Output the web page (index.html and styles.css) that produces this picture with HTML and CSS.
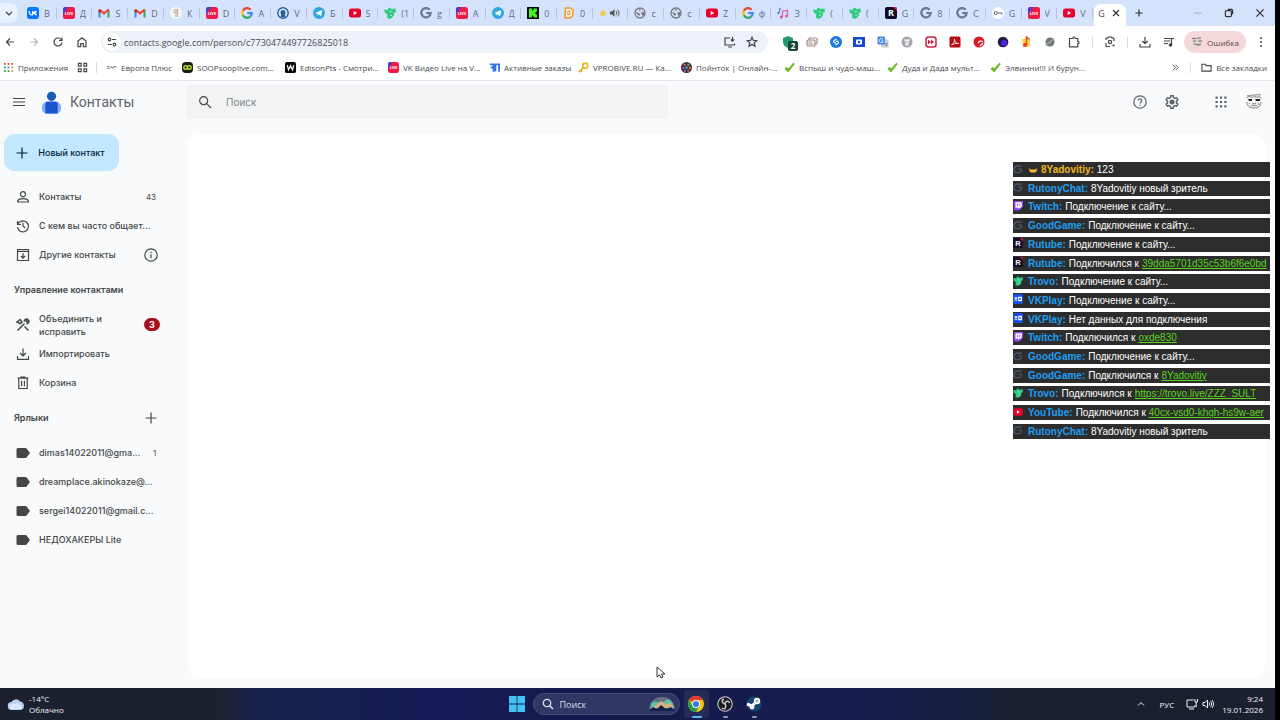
FILE: index.html
```html
<!DOCTYPE html>
<html lang="ru">
<head>
<meta charset="utf-8">
<title>Контакты</title>
<link rel="stylesheet" href="styles.css">
</head>
<body>
<svg class="defs" aria-hidden="true">
  <symbol id="vk" viewBox="0 0 12 12"><rect width="12" height="12" rx="3" fill="#0077ff"/><path d="M2 4c.3 2.500 1.500 4 3.600 4V4M5.600 6C7 6 7.800 5 8.200 4M5.600 6C7.300 6 8.300 7 8.700 8M9.500 4 7.500 6l2.200 2" fill="none" stroke="#fff" stroke-width="1.200"/></symbol>
  <symbol id="live" viewBox="0 0 12 12"><rect width="12" height="12" rx="2.500" fill="#ef1b47"/><path d="M0 8V2.500A2.500 2.500 0 0 1 2.500 0H5Z" fill="#4b3bd0"/><text x="6" y="7.600" font-size="4" font-weight="700" text-anchor="middle" fill="#fff">LIVE</text></symbol>
  <symbol id="gmail" viewBox="0 0 12 12"><path d="M1.500 10.500V2.800" stroke="#4285f4" stroke-width="2"/><path d="M10.500 10.500V2.800" stroke="#34a853" stroke-width="2"/><path d="M1.200 2.500 6 6.400l4.800-3.900" fill="none" stroke="#ea4335" stroke-width="2.200"/><path d="M.5 2.500v2.300l2 1.400V3.500z" fill="#b32a22"/></symbol>
  <symbol id="para" viewBox="0 0 12 12"><circle cx="6" cy="6" r="6" fill="#f7f7f5"/><path d="M8.500 2.800H5.200a1.500 1.500 0 0 0 0 3H6M6 2.800V10M7.600 2.800V10" fill="none" stroke="#b9a79b"/></symbol>
  <symbol id="google" viewBox="0 0 12 12"><g fill="none" stroke-width="2.200"><path d="M9.600 2.700A4.700 4.700 0 0 0 1.900 3.800" stroke="#ea4335"/><path d="M1.900 3.800a4.700 4.700 0 0 0 0 4.400" stroke="#fbbc05"/><path d="M1.900 8.200a4.700 4.700 0 0 0 7.300 1.400" stroke="#34a853"/><path d="M9.200 9.600A4.700 4.700 0 0 0 10.700 6H6.200" stroke="#4285f4"/></g></symbol>
  <symbol id="ggrey" viewBox="0 0 12 12"><path d="M9.600 2.700A4.700 4.700 0 1 0 10.700 6H6.200" fill="none" stroke="#697891" stroke-width="2.200"/></symbol>
  <symbol id="gg" viewBox="0 0 12 12"><path d="M10.500 2.500H4L1.500 5v3.500L3.500 10.500H8l2-2V6H5.500" fill="none" stroke="#4d6078" stroke-width="1.300"/></symbol>
  <symbol id="shield" viewBox="0 0 12 12"><circle cx="6" cy="6" r="5.200" fill="#dfeaf7" stroke="#285f9d" stroke-width="1.400"/><circle cx="6" cy="5.500" r="2.500" fill="#285f9d"/><path d="M4.500 7h3l1 3h-5z" fill="#285f9d"/></symbol>
  <symbol id="tg" viewBox="0 0 12 12"><circle cx="6" cy="6" r="6" fill="#32a7dc"/><path d="m2.300 6 7-3-1.200 6.200-2.300-1.600-1.200 1V7z" fill="#fff"/></symbol>
  <symbol id="yt" viewBox="0 0 12 12"><rect y="1.500" width="12" height="9" rx="2.500" fill="#e6002d"/><path d="m4.700 4 3.500 2-3.500 2z" fill="#fff"/></symbol>
  <symbol id="trovo" viewBox="0 0 12 12"><path d="M0 2.500 3.500 3 5 .5l3 1.500 3.500-.5.500 3.500-2.500 1 .8 2-2 2.500-2.800 1.500-2.500-1.500L3.300 7 1 6z" fill="#2ecb7e"/><path d="m5.500 4.500 3 .5M6 8l2 .5" stroke="#9eeac3"/></symbol>
  <symbol id="kick" viewBox="0 0 12 12"><rect width="12" height="12" fill="#051006"/><path d="M2 1.500h3v2h1v-1h1v-1h3v3H9v1H8v1h1v1h1v3H7v-1H6v-1H5v2H2z" fill="#43f51d"/></symbol>
  <symbol id="donate" viewBox="0 0 12 12"><path d="M2.500 1h5l2.800 2.500L9.500 9 7 11H2z" fill="#fff0d8" stroke="#ee9238" stroke-width="1.500"/><path d="M5 4h2v3.500H4.600z" fill="none" stroke="#ee9238"/></symbol>
  <symbol id="star" viewBox="0 0 12 12"><path d="m6 .5 1.600 3.600 4 .4-3 2.700.9 4L6 9.200l-3.500 2 .9-4-3-2.700 4-.4z" fill="#f4c83d"/></symbol>
  <symbol id="globe" viewBox="0 0 12 12"><circle cx="6" cy="6" r="5" fill="none" stroke="#73777d" stroke-width="1.300"/><path d="M1.500 5 5 6l1 1.500L5 9zM5 1.500 7 3 5.500 4.500zM7 5.500l3.500-.5L10 8 8.500 9z" fill="#73777d"/></symbol>
  <symbol id="music" viewBox="0 0 12 12"><path d="M5.500 10V4.300l5-1V9" fill="none" stroke="#da5fc2" stroke-width="1.300"/><circle cx="4.300" cy="10" r="1.500" fill="#e85591"/><circle cx="9.500" cy="9" r="1.500" fill="#ec5a77"/><path d="M2.500 6V1l2 1.500" stroke="#6b84df" fill="none"/><circle cx="1.500" cy="6" r="1.200" fill="#6b84df"/></symbol>
  <symbol id="rutube" viewBox="0 0 12 12"><rect width="12" height="12" rx="2" fill="#120b29"/><path d="M8 0h2a2 2 0 0 1 2 2v2z" fill="#ed1951"/><text x="6" y="9.200" text-anchor="middle" font-size="9" font-weight="700" fill="#fff">R</text></symbol>
  <symbol id="key" viewBox="0 0 12 12"><circle cx="6" cy="6" r="6" fill="#fff"/><circle cx="3.700" cy="6" r="1.500" fill="none" stroke="#526471"/><path d="M5.500 6H10v1.500" fill="none" stroke="#526471"/></symbol>
  <symbol id="twitch" viewBox="0 0 12 12"><path d="M1 0h11v7L8 11H6l-2 1v-1H1z" fill="#9146ff"/><path d="M3 1.500h7.500v5L9 8H7.500L6 9.500V8H3z" fill="#fff"/><path d="M5.500 3v3M8.200 3v3" stroke="#9146ff"/></symbol>
  <symbol id="vkplay" viewBox="0 0 12 12"><rect width="12" height="12" rx="2" fill="#164fe8"/><path d="m2 4 3 4M5 4 2 8M7 4h3v4H7z" stroke="#fff" fill="none" stroke-width="1.400"/></symbol>
  <symbol id="check" viewBox="0 0 12 12"><path d="m.5 7.500 2.200-2.200 2 1.700L10.200.8l1.600 1.300L4.500 11.500z" fill="#6cb82f"/></symbol>
  <symbol id="tag" viewBox="0 0 14 12"><path d="M2 1h7.500c.6 0 1 .3 1.300.7L14 6l-3.200 4.300c-.3.400-.7.700-1.300.7H2A1.500 1.500 0 0 1 .5 9.500v-7A1.500 1.500 0 0 1 2 1z" fill="#444746"/></symbol>
</svg>

<div class="window">
  <header class="browser">
    <div class="tabstrip">
      <button class="tab-list" aria-label="Поиск вкладок"><svg viewBox="0 0 10 10"><path d="m2.500 4 2.500 2.500L7.500 4"/></svg></button>
      <nav class="tabs" aria-label="Вкладки">
        <button class="tab"><svg><use href="#vk"/></svg><span>В</span></button>
        <button class="tab"><svg><use href="#live"/></svg><span>Д</span></button>
        <button class="tab"><svg><use href="#gmail"/></svg><span>S</span></button>
        <button class="tab"><svg><use href="#gmail"/></svg><span>D</span></button>
        <button class="tab"><svg><use href="#para"/></svg><span>К</span></button>
        <button class="tab"><svg><use href="#live"/></svg><span>D</span></button>
        <button class="tab"><svg><use href="#google"/></svg><span>A</span></button>
        <button class="tab"><svg><use href="#shield"/></svg><span>V</span></button>
        <button class="tab"><svg><use href="#tg"/></svg><span>Б</span></button>
        <button class="tab"><svg><use href="#yt"/></svg><span>S</span></button>
        <button class="tab"><svg><use href="#trovo"/></svg><span>(1</span></button>
        <button class="tab"><svg><use href="#ggrey"/></svg><span>g</span></button>
        <button class="tab"><svg><use href="#live"/></svg><span>A</span></button>
        <button class="tab"><svg><use href="#tg"/></svg><span>Д</span></button>
        <button class="tab"><svg><use href="#kick"/></svg><span>0</span></button>
        <button class="tab"><svg><use href="#donate"/></svg><span>0</span></button>
        <button class="tab sound"><svg class="mini"><use href="#star"/></svg><svg viewBox="0 0 12 12"><path d="M2 4.500h2L6.500 2v8L4 7.500H2z" fill="#555"/><path d="M8 4c1 1 1 3 0 4M9.500 2.500c2 2 2 5 0 7" fill="none" stroke="#555"/></svg></button>
        <button class="tab"><svg><use href="#globe"/></svg><span>c</span></button>
        <button class="tab"><svg><use href="#globe"/></svg><span>c</span></button>
        <button class="tab"><svg><use href="#yt"/></svg><span>Z</span></button>
        <button class="tab"><svg><use href="#google"/></svg><span>ф</span></button>
        <button class="tab"><svg><use href="#music"/></svg><span>З</span></button>
        <button class="tab"><svg><use href="#trovo"/></svg><span>(</span></button>
        <button class="tab"><svg><use href="#trovo"/></svg><span>(</span></button>
        <button class="tab"><svg><use href="#rutube"/></svg><span>G</span></button>
        <button class="tab"><svg><use href="#ggrey"/></svg><span>8</span></button>
        <button class="tab"><svg><use href="#ggrey"/></svg><span>C</span></button>
        <button class="tab"><svg><use href="#key"/></svg><span>G</span></button>
        <button class="tab"><svg><use href="#live"/></svg><span>V</span></button>
        <button class="tab"><svg><use href="#yt"/></svg><span>V</span></button>
      </nav>
      <div class="tab-active"><span>G</span><button aria-label="Закрыть вкладку"><svg viewBox="0 0 10 10"><path d="m2.500 2.500 5 5m0-5-5 5"/></svg></button></div>
      <button class="new-tab" aria-label="Новая вкладка"><svg viewBox="0 0 10 10"><path d="M5 2v6M2 5h6"/></svg></button>
      <div class="win-controls">
        <button aria-label="Свернуть"><svg viewBox="0 0 10 10"><path d="M2 5h6" stroke="#a9b4c8"/></svg></button>
        <button aria-label="Развернуть"><svg viewBox="0 0 10 10"><rect x="2" y="3" width="5" height="5" rx="1"/><path d="M4 2h3a1 1 0 0 1 1 1v3"/></svg></button>
        <button aria-label="Закрыть"><svg viewBox="0 0 10 10"><path d="m2 2 6 6m0-6-6 6"/></svg></button>
      </div>
    </div>

    <div class="toolbar">
      <div class="nav">
        <button aria-label="Назад"><svg viewBox="0 0 12 12"><path d="M10 6H2.500M6 2.500 2.500 6 6 9.500"/></svg></button>
        <button class="dim" aria-label="Вперёд"><svg viewBox="0 0 12 12"><path d="M2 6h7.500M6 2.500 9.500 6 6 9.500"/></svg></button>
        <button aria-label="Обновить"><svg viewBox="0 0 12 12"><path d="M9.500 4A4 4 0 1 0 10 6.500M10 1.500v3H7"/></svg></button>
        <button aria-label="Домой"><svg viewBox="0 0 12 12"><path d="M2 5 6 1.800 10 5v5.700H7.300V7.500H4.700v3.200H2z"/></svg></button>
      </div>
      <form class="omnibox">
        <button type="button" class="site" aria-label="Сведения о сайте"><svg viewBox="0 0 12 12"><circle cx="3.500" cy="3.500" r="1.300"/><path d="M6 3.500h4M2 8.500h4"/><circle cx="8.500" cy="8.500" r="1.300"/></svg></button>
        <input type="text" aria-label="Адрес" value="contacts.google.com/person/c7730474497726825018">
        <button type="button" aria-label="Установить"><svg viewBox="0 0 12 12"><path d="M6 2H1v7h9.500V7.500M4 11h4M8.500 1v4M6.800 3.500l1.700 1.700 1.700-1.700"/></svg></button>
        <button type="button" aria-label="В закладки"><svg viewBox="0 0 12 12"><path d="m6 1.200 1.400 3.200 3.400.3-2.600 2.200.8 3.400L6 8.500l-3 1.800.8-3.400L1.200 4.700l3.400-.3z"/></svg></button>
      </form>
      <div class="extensions">
        <button class="ext-counter" aria-label="Защита"><svg viewBox="0 0 12 12"><path d="m6 0 5 2v4c0 3-2 5-5 6-3-1-5-3-5-6V2z" fill="#279a70" stroke="none"/></svg><b>2</b></button>
        <button aria-label="Карточки"><svg viewBox="0 0 12 12"><g stroke="#a58c85"><rect x="3" y="2" width="8" height="6" rx="1"/><rect x="1" y="4" width="8" height="6" rx="1" fill="#f4ece8"/><path d="M2.500 6h3M2.500 8H7"/></g></svg></button>
        <button aria-label="Shazam"><svg viewBox="0 0 12 12"><circle cx="6" cy="6" r="6" fill="#1978e5" stroke="none"/><path d="M6.500 3 4 4.700c-1.200 1 0 2.300 1 2.300l1-.5M5.500 9 8 7.300c1.200-1 0-2.300-1-2.300l-1 .5" stroke="#fff"/></svg></button>
        <button aria-label="Снимок"><svg viewBox="0 0 12 12"><rect y="1" width="12" height="10" fill="#1748c6" stroke="none"/><rect x="3" y="3.500" width="6" height="5" rx="1" fill="#fff" stroke="none"/><circle cx="6" cy="6" r="1.200" fill="#1748c6" stroke="none"/></svg></button>
        <button aria-label="Переводчик"><svg viewBox="0 0 12 12"><rect x="4" y="3.500" width="7.500" height="8" rx="1" fill="#c8cdd4" stroke="none"/><rect x=".5" y=".5" width="7.500" height="8" rx="1" fill="#4c86ea" stroke="none"/><path d="M6 3.500A2 2 0 1 0 6.300 5H4.500" stroke="#fff" stroke-width=".8"/><path d="m8.500 7 2 3m0-3-2 3" stroke="#68727c" stroke-width=".8"/></svg></button>
        <button aria-label="T"><svg viewBox="0 0 12 12"><circle cx="6" cy="6" r="5.500" fill="#a3a5aa" stroke="none"/><path d="M3 4h6M5 4v5h2V4" stroke="#fff"/></svg></button>
        <button aria-label="Ускорение видео"><svg viewBox="0 0 12 12"><rect x="1" y="1" width="10" height="10" rx="2.500" stroke="#c92140" stroke-width="1.500"/><path d="m3 3.500 3 2.500-3 2.500zM6 3.500 9 6 6 8.500z" fill="#c92140" stroke="none"/></svg></button>
        <button aria-label="PDF"><svg viewBox="0 0 12 12"><rect x=".5" y=".5" width="11" height="11" rx="1.500" fill="#b30b0f" stroke="none"/><path d="M2.500 9c2-1 3.500-4 3-6 0 3 2 4.500 4 4.500-2-.5-5 .3-7 1.500z" stroke="#fff" stroke-width=".8"/></svg></button>
        <button aria-label="Блокировка"><svg viewBox="0 0 12 12"><circle cx="6" cy="6" r="5.500" fill="#db1921" stroke="none"/><path d="m5 7 2-2 3 .5M7 10l3-3" stroke="#fff"/></svg></button>
        <button aria-label="Шар"><svg viewBox="0 0 12 12"><circle cx="6" cy="6" r="5.300" fill="#251b45" stroke="none"/><circle cx="7" cy="7" r="3" fill="#5121e7" stroke="none"/></svg></button>
        <button aria-label="Музыка"><svg viewBox="0 0 12 12"><path d="M2 3h8v6l-2 2H3z" fill="#ffd642" stroke="none"/><path d="M6.500 9V1l3 2.500" stroke="#ee3f24" stroke-width="1.500"/><circle cx="5" cy="9" r="2" fill="#ee3f24" stroke="none"/></svg></button>
        <button aria-label="Планета"><svg viewBox="0 0 12 12"><circle cx="6" cy="6" r="4.500" fill="#72777b" stroke="none"/><path d="m1.500 9.500 9-7" stroke="#a8acae"/></svg></button>
        <button aria-label="Расширения"><svg viewBox="0 0 12 12"><path d="M1.500 2.500h3.300c0-2 2.400-2 2.400 0h2.600v2.800c1.700 0 1.700 2.400 0 2.400v3.100H1.500z"/></svg></button>
      </div>
      <i class="sep"></i>
      <button class="tool" aria-label="Объектив"><svg viewBox="0 0 12 12"><path d="M2 4V2.800c0-.6.400-1 1-1h1L4.500 1h3l.5.800h1c.6 0 1 .4 1 1V5M2 7v2.500c0 .6.400 1 1 1h3"/><circle cx="6" cy="6" r="1.600"/><circle cx="9.500" cy="9.500" r=".5"/></svg></button>
      <i class="sep"></i>
      <button class="tool" aria-label="Загрузки"><svg viewBox="0 0 12 12"><path d="M6 1v6.500M3.300 5 6 7.700 8.700 5M1 8v3h10V8"/></svg></button>
      <button class="tool" aria-label="Медиа"><svg viewBox="0 0 12 12"><path d="M1 2.500h7M1 5h6M1 7.500h4M8.500 9V2.500H11"/><circle cx="7.500" cy="9" r="1.200" fill="#444"/></svg></button>
      <button class="error"><svg viewBox="0 0 12 12"><rect x="1" y="1" width="10" height="10" rx="3" fill="#ddd5d2" stroke="none"/><path d="M1 2.500h4M6 2h4M2 5h3M7 5h4M3 8h2l2 1 3-1" stroke="#786f6e"/></svg>Ошибка</button>
      <button class="menu" aria-label="Меню"><svg viewBox="0 0 12 12"><g fill="#444" stroke="none"><circle cx="6" cy="2" r="1"/><circle cx="6" cy="6" r="1"/><circle cx="6" cy="10" r="1"/></g></svg></button>
    </div>

    <nav class="bookmarks" aria-label="Закладки">
      <a href="#" class="bm apps"><svg viewBox="0 0 12 12"><path d="M1 1h2v2H1zM5 1h2v2H5zM9 1h2v2H9z" fill="#e7473c"/><path d="M1 5h2v2H1z" fill="#3f9b56"/><path d="M5 5h2v2H5z" fill="#4285f4"/><path d="M9 5h2v2H9zM9 9h2v2H9z" fill="#dca134"/><path d="M1 9h2v2H1zM5 9h2v2H5z" fill="#38934e"/></svg>Приложения</a>
      <a href="#" class="bm groups" aria-label="Группы"><svg viewBox="0 0 12 12"><path d="M1.500 1.500h3v3h-3zM7.500 1.500h3v3h-3zM1.500 7.500h3v3h-3zM7.500 7.500h3v3h-3z" fill="none" stroke="#444" stroke-width="1.200"/></svg></a>
      <i class="sep"></i>
      <a href="#" class="bm europa"><svg viewBox="0 0 12 12"><path d="M1 5h3M1 7h3M5 7l1-2 1 2M8 7V5h3v1" fill="none" stroke="#777"/></svg>Европа Плюс</a>
      <a href="#" class="bm"><svg viewBox="0 0 12 12"><rect width="12" height="12" rx="4" fill="#17200c"/><rect x="2" y="4" width="4" height="4" rx="2" fill="none" stroke="#c1e82b" stroke-width="1.500"/><rect x="6" y="4" width="4" height="4" rx="2" fill="none" stroke="#c1e82b" stroke-width="1.500"/></svg>SOOPsooplive.com...</a>
      <a href="#" class="bm"><svg viewBox="0 0 12 12"><rect width="12" height="12" rx="2" fill="#080808"/><path d="m2.500 3.500 1.300 5L6 4l2.200 4.500 1.300-5" fill="none" stroke="#fff" stroke-width="1.300"/></svg>EdisonPts - Смотри...</a>
      <a href="#" class="bm vkv"><svg><use href="#live"/></svg>VK Видео Live на V...</a>
      <a href="#" class="bm orders"><svg viewBox="0 0 12 12"><path d="M1 2.500h4v8M5 6H2M7 10V2.500h4v8M7 3v3" fill="none" stroke="#3675db" stroke-width="2"/></svg>Активные заказы</a>
      <a href="#" class="bm"><svg viewBox="0 0 12 12"><circle cx="8" cy="4" r="2.700" fill="none" stroke="#efbc2e" stroke-width="2"/><path d="M6 6 1 11m2-2 1.500 1.500" stroke="#e5a51f" stroke-width="1.800"/></svg>VPROBIVE.RU — Ка...</a>
      <a href="#" class="bm"><svg viewBox="0 0 12 12"><circle cx="6" cy="6" r="6" fill="#342d35"/><g><circle cx="4" cy="3" r="1.300" fill="#d45b6a"/><circle cx="8" cy="3" r="1.300" fill="#60a853"/><circle cx="2.500" cy="6.500" r="1.300" fill="#b64cad"/><circle cx="6" cy="6" r="1.300" fill="#55bdc2"/><circle cx="9.700" cy="6.500" r="1.300" fill="#d77c3f"/><circle cx="4.300" cy="9.500" r="1.300" fill="#5b74cf"/><circle cx="8" cy="9.500" r="1.300" fill="#d8476b"/></g></svg>Пойнток | Онлайн-...</a>
      <a href="#" class="bm"><svg><use href="#check"/></svg>Вспыш и чудо-маш...</a>
      <a href="#" class="bm"><svg><use href="#check"/></svg>Дуда и Дада мульт...</a>
      <a href="#" class="bm"><svg><use href="#check"/></svg>Элвинни!!! И бурун...</a>
      <button class="more" aria-label="Ещё закладки"><svg viewBox="0 0 12 12"><path d="m3 3 3 3-3 3m3-6 3 3-3 3"/></svg></button>
      <i class="sep"></i>
      <a href="#" class="bm all"><svg viewBox="0 0 12 12"><path d="M1 2.500h3.500L5.700 4H11v6H1z" fill="none" stroke="#444" stroke-width="1.200"/></svg>Все закладки</a>
    </nav>
  </header>

  <div class="app">
    <header class="app-head">
      <div class="brand">
        <button class="burger" aria-label="Главное меню"><svg viewBox="0 0 14 14"><path d="M1 3.500h12M1 7h12M1 10.500h12"/></svg></button>
        <svg class="logo" viewBox="0 0 20 24"><circle cx="10" cy="5.500" r="4.800" fill="#185abc"/><rect y="11.500" width="20" height="12" rx="5" fill="#82aaff"/><path d="M3.500 13.500a2.500 2.500 0 0 1 2.500-2.500h8a2.500 2.500 0 0 1 2.500 2.500v10h-13z" fill="#1a56cf"/></svg>
        <span>Контакты</span>
      </div>
      <label class="search"><svg viewBox="0 0 14 14"><circle cx="5.700" cy="5.700" r="4"/><path d="m8.700 8.700 4.300 4.300"/></svg><input type="search" placeholder="Поиск" aria-label="Поиск"></label>
      <div class="account">
        <button aria-label="Справка"><svg viewBox="0 0 14 14"><circle cx="7" cy="7" r="6.200"/><path d="M5.200 5.600c0-2.300 3.600-2.300 3.600 0C8.800 7 7 7 7 8.500M7 9.700V11"/></svg></button>
        <button aria-label="Настройки"><svg viewBox="0 0 14 14"><path d="m5.800.8h2.400l.4 1.800 1.300.8 1.700-.6 1.300 2.100L11.500 6.200v1.600l1.400 1.300-1.300 2.100-1.700-.6-1.300.8-.4 1.800H5.800l-.4-1.800-1.300-.8-1.700.6-1.300-2.100 1.400-1.300V6.200L1.100 4.900l1.300-2.100 1.700.6 1.300-.8z" stroke-width="1.500"/><circle cx="7" cy="7" r="2" fill="#5f6368"/></svg></button>
        <button class="grid-btn" aria-label="Приложения Google"><svg viewBox="0 0 14 14"><path d="M1.500 1.500h2.200v2.200H1.500zM5.900 1.500h2.200v2.200H5.900zM10.300 1.500h2.200v2.200h-2.200zM1.500 5.900h2.200v2.200H1.500zM5.900 5.900h2.200v2.200H5.900zM10.300 5.900h2.200v2.200h-2.200zM1.500 10.300h2.200v2.200H1.500zM5.900 10.300h2.200v2.200H5.900zM10.300 10.300h2.200v2.200h-2.200z" fill="#5f6368" stroke="none"/></svg></button>
        <button class="avatar" aria-label="Аккаунт"><svg viewBox="0 0 18 18"><circle cx="9" cy="9" r="8.500" fill="#f3f3f3" stroke="none"/><path d="M2 3c2-1 3 0 5-1 2 1 4-1 6 0l3-.5M2 5c1-2 3-2 5-.5 2-1 4-1 5 0 2-1.500 4-1 4 1M2 9c0 4 3 6 7 6s6-1 7-6M7 10l2 1 2-1M6 13l2-1 1 1 2-1 1 1M4 10l1 1M13 10l1 2" stroke="#666" stroke-width=".8"/><path d="M3 6h4v2H4zM10 6h5v2h-4z" fill="#222" stroke="none"/></svg></button>
      </div>
    </header>

    <div class="content">
      <aside class="sidebar">
        <button class="create"><svg viewBox="0 0 14 14"><path d="M7 1.500v11M1.500 7h11"/></svg>Новый контакт</button>
        <nav>
          <a href="#" class="row"><svg viewBox="0 0 14 14"><circle cx="7" cy="4.200" r="2.500"/><path d="M1.700 12v-1.500C3.500 8 10.500 8 12.300 10.500V12z"/></svg><span>Контакты</span><small>43</small></a>
          <a href="#" class="row"><svg viewBox="0 0 14 14"><path d="M1.500 2v3.500H5M1.800 5.500A5.500 5.500 0 1 1 1.500 8M7 3.800V7l2.300 2"/></svg><span>С кем вы часто общает...</span></a>
          <a href="#" class="row"><svg viewBox="0 0 14 14"><path d="M1.500 1.500h11v11h-11zM1.500 3.300h11M7 5v5M4.800 8 7 10.200 9.200 8"/></svg><span>Другие контакты</span><svg class="info" viewBox="0 0 14 14"><circle cx="7" cy="7" r="6.200"/><path d="M7 6.200v4M7 3.700v1.300"/></svg></a>
          <h2>Управление контактами</h2>
          <a href="#" class="row two"><svg viewBox="0 0 14 14"><path d="m1.500 12.500 7-7M8 3.500C8.500 1.500 10 .8 11.500 1.200L10 3l1 1 1.800-1.500c.4 1.500-.3 3-2.300 3.500M1 4l3-2.500L6 4 4.500 5.500zM8.500 8.500l4 4" stroke-width="1.500"/></svg><span>Объединить и<br>исправить</span><b class="badge">3</b></a>
          <a href="#" class="row"><svg viewBox="0 0 14 14"><path d="M7 1.500v7M4 6l3 3 3-3M1.500 9v3.300h11V9"/></svg><span>Импортировать</span></a>
          <a href="#" class="row"><svg viewBox="0 0 14 14"><path d="M1.500 2.200h11M5 2V1.200h4V2M2.800 2.500v10h8.400v-10M5.600 4.800v5.500M8.400 4.800v5.500"/></svg><span>Корзина</span></a>
          <h2>Ярлыки<button class="add" aria-label="Создать ярлык"><svg viewBox="0 0 14 14"><path d="M7 1.500v11M1.500 7h11"/></svg></button></h2>
          <a href="#" class="row"><svg class="tag"><use href="#tag"/></svg><span>dimas14022011@gma...</span><small>1</small></a>
          <a href="#" class="row"><svg class="tag"><use href="#tag"/></svg><span>dreamplace.akinokaze@...</span></a>
          <a href="#" class="row"><svg class="tag"><use href="#tag"/></svg><span>sergei14022011@gmail.c...</span></a>
          <a href="#" class="row"><svg class="tag"><use href="#tag"/></svg><span>НЕДОХАКЕРЫ Lite</span></a>
        </nav>
      </aside>
      <main></main>
    </div>
  </div>

  <footer class="taskbar">
    <button class="weather"><svg viewBox="0 0 18 14"><path d="M5 13a4 4 0 0 1-.5-8A5 5 0 0 1 13 4.500 4.300 4.300 0 0 1 13.500 13z" fill="#bcd0f5"/><path d="M3 12a4 4 0 0 1 5-5 5 5 0 0 1 7 5z" fill="#dde7fb"/></svg><span>-14°C<br>Облачно</span></button>
    <div class="dock">
      <button class="start" aria-label="Пуск"><svg viewBox="0 0 16 16"><path d="M0 0h7.600v7.600H0zM8.400 0H16v7.600H8.400zM0 8.400h7.600V16H0zM8.400 8.400H16V16H8.400z" fill="#42c5f5"/></svg></button>
      <label class="task-search"><svg viewBox="0 0 12 12"><circle cx="5" cy="5" r="3.700" fill="none" stroke="#e5e8f2" stroke-width="1.300"/><path d="m7.700 7.700 3.300 3.300" stroke="#e5e8f2" stroke-width="1.400"/></svg><input type="search" placeholder="Поиск" aria-label="Поиск в Windows"><svg class="aurora" viewBox="0 0 28 16"><path d="M1 13C2 5 7 1 14 1s12 4 13 12z" fill="#657386"/><path d="M3 8c5-6 9 3 13-2s7-2 9 2l1 4H3z" fill="#5cc6a2"/><path d="m7 10 6-5 5 3 4-1 4 5H5z" fill="#d5b27e"/><path d="m1 15 4-4 4 2 4-4 5 4 5-2 4 4z" fill="#16234f"/></svg></label>
      <button class="task active" aria-label="Chrome"><svg viewBox="0 0 16 16"><circle cx="8" cy="8" r="8" fill="#fbc116"/><path d="M8 8 1.100 4A8 8 0 0 1 14.900 4H8z" fill="#e33b2e"/><path d="M1.100 4A8 8 0 0 0 8 16l3.400-6L8 8 4.600 10z" fill="#279b4b"/><circle cx="8" cy="8" r="4" fill="#fff"/><circle cx="8" cy="8" r="3.100" fill="#337ee9"/></svg></button>
      <button class="task" aria-label="OBS"><svg viewBox="0 0 16 16"><circle cx="8" cy="8" r="7.200" fill="#1c1c20" stroke="#c8c8cc" stroke-width="1.100"/><path d="M7 3c-3 1-2 4 1 5M12.500 7c-1-3-4-2-4.500 1M5 12c3 2 5-1 3-4" fill="none" stroke="#c8c8cc" stroke-width="1.500"/></svg></button>
      <button class="task" aria-label="Steam"><svg viewBox="0 0 16 16"><circle cx="8" cy="8" r="7.500" fill="#17466f"/><path d="m1 8 5 2 5-5" fill="none" stroke="#fff" stroke-width="3"/><circle cx="11" cy="5" r="3.200" fill="#fff"/><circle cx="11" cy="5" r="1.500" fill="#9bb9ce"/><circle cx="6" cy="11" r="2.400" fill="#fff"/></svg></button>
    </div>
    <div class="tray">
      <button aria-label="Скрытые значки"><svg viewBox="0 0 12 12"><path d="m3 7.500 3-3 3 3"/></svg></button>
      <button class="lang">РУС</button>
      <button class="net" aria-label="Сеть и звук"><svg viewBox="0 0 12 12"><path d="M7.500 2H1v7h8V7M3 11h5M9 1v3h2.500V1M10.200 4v5"/></svg><svg viewBox="0 0 12 12"><path d="M1 4.500h2L5.500 2v8L3 7.500H1zM7 4.300c.8 1 .8 2.400 0 3.400M8.500 3c1.500 1.800 1.500 4.200 0 6M10 2c2 2.500 2 5.500 0 8"/></svg></button>
      <time>9:24<br>19.01.2026</time>
    </div>
  </footer>

  <section class="chat" aria-label="Чат">
    <p><svg><use href="#gg"/></svg><svg class="crown" viewBox="0 0 12 12"><path d="M1 4l2.500 1.500h5L11 4l-1 4-2 1H4L2 8z" fill="#f1bd2c"/></svg><b class="gold">8Yadovitiy:</b> 123</p>
    <p><svg><use href="#gg"/></svg><b>RutonyChat:</b> 8Yadovitiy новый зритель</p>
    <p><svg><use href="#twitch"/></svg><b>Twitch:</b> Подключение к сайту...</p>
    <p><svg><use href="#gg"/></svg><b>GoodGame:</b> Подключение к сайту...</p>
    <p><svg><use href="#rutube"/></svg><b>Rutube:</b> Подключение к сайту...</p>
    <p><svg><use href="#rutube"/></svg><b>Rutube:</b> Подключился к <a href="#">39dda5701d35c53b6f6e0bd</a></p>
    <p><svg><use href="#trovo"/></svg><b>Trovo:</b> Подключение к сайту...</p>
    <p><svg><use href="#vkplay"/></svg><b>VKPlay:</b> Подключение к сайту...</p>
    <p><svg><use href="#vkplay"/></svg><b>VKPlay:</b> Нет данных для подключения</p>
    <p><svg><use href="#twitch"/></svg><b>Twitch:</b> Подключился к <a href="#">oxde830</a></p>
    <p><svg><use href="#gg"/></svg><b>GoodGame:</b> Подключение к сайту...</p>
    <p><svg><use href="#gg"/></svg><b>GoodGame:</b> Подключился к <a href="#">8Yadovitiy</a></p>
    <p><svg><use href="#trovo"/></svg><b>Trovo:</b> Подключился к <a href="#">https://trovo.live/ZZZ_SULT</a></p>
    <p><svg><use href="#yt"/></svg><b>YouTube:</b> Подключился к <a href="#">40cx-vsd0-khqh-hs9w-aer</a></p>
    <p><svg><use href="#gg"/></svg><b>RutonyChat:</b> 8Yadovitiy новый зритель</p>
  </section>
  <svg class="cursor" viewBox="0 0 10 14"><path d="M1 1v10l2.500-2.200L5 12l2-1-1.500-3H9z" fill="#fff" stroke="#333"/></svg>
</div>
</body>
</html>
```
FILE: styles.css
```css
* { box-sizing: border-box; }
body { margin: 0; background: #000; font-family: "Open Sans", "Noto Sans", sans-serif; font-size: 9px; color: #474a4f; }
button { border: 0; padding: 0; margin: 0; background: none; font: inherit; color: inherit; display: flex; align-items: center; justify-content: center; }
input { border: 0; padding: 0; background: none; font: inherit; color: inherit; min-width: 0; outline: 0; }
a { color: inherit; text-decoration: none; }
svg { width: 12px; height: 12px; flex: none; display: block; }
.defs { display: none; }
.window { position: relative; display: flex; flex-direction: column; min-height: 100vh; margin-right: 5px; overflow: hidden; background: #f8fafc; }
.sep { width: 1px; height: 11px; background: #d3dcec; flex: none; }

/* Tab strip */
.browser { background: #fff; border-bottom: 1px solid #e3e5e8; }
.tabstrip { display: flex; height: 26px; background: #d5e2fc; }
.tab-list { width: 18px; height: 20px; margin: 3px 4px 0 0; background: #eaf1fe; border-radius: 0 8px 8px 0; }
.tab-list svg, .tab-active svg, .new-tab svg, .win-controls svg { width: 12px; height: 12px; fill: none; stroke: #333; stroke-width: 1; }
.tabs { display: flex; flex: 1; min-width: 0; }
.tab { position: relative; flex: 1 1 0; min-width: 0; justify-content: flex-start; gap: 5px; padding-left: 5px; overflow: hidden; color: #5f6d86; }
.tab::after { content: ""; position: absolute; right: 1px; top: 8px; width: 1px; height: 11px; background: #b4c3e0; }
.tab span { width: 9px; overflow: hidden; white-space: nowrap; text-align: left; }
.sound { gap: 1px; }
.sound .mini { width: 8px; height: 8px; }
.tab-active { display: flex; align-items: center; justify-content: center; gap: 5px; width: 32px; height: 22px; margin-top: 4px; padding-bottom: 4px; background: #fff; border-radius: 7px 7px 0 0; }
.new-tab { width: 26px; }
.win-controls { display: flex; margin-left: 30px; }
.win-controls button { width: 31px; }

/* Toolbar */
.toolbar { display: flex; align-items: center; height: 32px; }
.toolbar svg { fill: none; stroke: #444; stroke-width: 1.2; }
.nav { display: flex; margin-left: -2px; }
.nav button, .tool { width: 24px; height: 24px; }
.nav .dim svg { stroke: #b7b9bd; }
.omnibox { display: flex; align-items: center; flex: 1; min-width: 0; height: 22px; margin: 0 8px 0 7px; padding: 0 5px 0 2px; border-radius: 11px; background: #edf1fa; }
.omnibox button { width: 22px; height: 18px; }
.omnibox .site { width: 18px; border-radius: 9px; background: #fff; margin-right: 3px; }
.omnibox input { flex: 1; }
.extensions { display: flex; flex: 0 0 310px; margin-right: 6px; }
.extensions button { flex: 1; position: relative; height: 24px; }
.extensions b { position: absolute; left: 12px; top: 11px; width: 10px; height: 10px; border-radius: 2px; background: #174434; color: #fff; font-size: 8px; line-height: 10px; }
.toolbar .sep + .tool { margin-left: 5px; }
.toolbar .tool + .sep { margin-left: 5px; }
.error { gap: 4px; height: 22px; width: 62px; margin-left: 3px; border-radius: 11px; background: #f5d8da; color: #5f4245; font-size: 8px; }
.menu { width: 22px; height: 24px; margin: 0 3px 0 4px; }

/* Bookmarks */
.bookmarks { display: flex; align-items: center; height: 22px; padding: 0 8px 4px 3px; white-space: nowrap; font-size: 8px; }
.bookmarks svg { width: 11px; height: 11px; }
.bm { display: flex; align-items: center; gap: 4px; flex: 0 0 103px; min-width: 0; }
.bm.apps { flex-basis: 74px; }
.bm.groups { flex-basis: 19px; }
.bm.europa { flex-basis: 76px; margin-left: 9px; }
.bm.vkv { flex-basis: 101px; }
.bm.orders { flex-basis: 89px; }
.bm.all { flex-basis: auto; margin-left: 10px; }
.more { margin: 0 9px 0 auto; }
.more svg { fill: none; stroke: #444; }

/* Contacts */
.app { display: flex; flex-direction: column; flex: 1; font-family: Inter, Roboto, sans-serif; color: #444746; }
.app svg { width: 14px; height: 14px; fill: none; stroke: #444746; stroke-width: 1.2; }
.app-head { display: flex; align-items: center; height: 42px; }
.brand { display: flex; align-items: center; width: 186px; padding-left: 12px; font-family: Roboto, sans-serif; font-size: 14px; color: #5f6368; }
.app .logo { width: 19px; height: 23px; margin: 0 9px 0 16px; stroke: none; }
.search { display: flex; align-items: center; flex: 0 1 482px; height: 34px; padding-left: 12px; gap: 14px; border-radius: 4px; background: #f1f3f4; }
.search input { flex: 1; font-size: 10px; }
.search input::placeholder { color: #80868b; opacity: 1; }
.account { display: flex; align-items: center; margin-left: auto; padding-right: 12px; }
.account button { width: 32px; height: 32px; }
.account svg { stroke: #5f6368; }
.account .grid-btn { margin-left: 17px; }
.account .avatar { width: 18px; margin-left: 8px; }
.account .avatar svg { width: 18px; height: 18px; }
.content { display: flex; flex: 1; padding: 11px 10px 10px 0; }
.sidebar { width: 188px; flex: none; }
.create { width: 115px; height: 37px; gap: 9px; margin: 0 0 11px 4px; padding-right: 3px; border-radius: 11px; background: #c2e7ff; color: #001d35; font-weight: 500; }
.create svg { stroke: #001d35; }
.row { display: flex; align-items: center; height: 29px; padding: 0 28px 0 16px; gap: 9px; white-space: nowrap; font-weight: 500; }
.row span { flex: 1; }
.row small { width: 18px; text-align: center; font-size: 8px; font-weight: 400; }
.row .info { margin-right: 2px; }
.row.two { line-height: 13px; }
.app .tag { stroke: none; height: 12px; }
.badge { width: 16px; height: 13px; border-radius: 7px; background: #a50e1c; color: #fff; line-height: 13px; text-align: center; }
.sidebar h2 { display: flex; align-items: center; justify-content: space-between; height: 41px; margin: 0; padding: 0 30px 0 14px; font-size: 9px; font-weight: 600; }
main { flex: 1; background: #fff; border-radius: 12px; }

/* Taskbar */
.taskbar { display: flex; align-items: center; justify-content: space-between; height: 32px; background: linear-gradient(90deg, #1c222d 0 17%, #17214a 20%, #161b58 34%, #151b4c 50%, #161b52 66%, #17203f 75%, #1a202e 80%); color: #f2f4f8; font-size: 8px; }
.weather { gap: 4px; margin-left: 7px; text-align: left; line-height: 11px; }
.weather svg { width: 18px; height: 14px; }
.dock { position: absolute; left: 50%; transform: translateX(-50%); display: flex; align-items: center; padding-right: 8px; }
.start { width: 32px; height: 32px; }
.start svg, .task svg { width: 16px; height: 16px; }
.task-search { display: flex; align-items: center; width: 147px; height: 22px; padding: 0 3px 0 8px; gap: 6px; border: 1px solid #454b79; border-radius: 11px; background: #303765; font-size: 9px; }
.task-search input { flex: 1; }
.task-search input::placeholder { color: #dcdfec; opacity: 1; }
.task-search .aurora { width: 28px; height: 16px; }
.task { position: relative; width: 25px; height: 28px; margin-left: 4px; border-radius: 4px; }
.task::after { content: ""; position: absolute; bottom: 0; left: 10px; width: 5px; height: 2px; border-radius: 1px; background: #9599a9; }
.task.active { background: #242b55; }
.task.active::after { left: 8px; width: 10px; background: #52bdf0; }
.tray { display: flex; align-items: center; padding-right: 12px; }
.tray svg { fill: none; stroke: #eef0f5; }
.lang { margin: 0 12px; }
.net { gap: 4px; }
.tray time { margin-left: 8px; text-align: right; line-height: 11px; }

/* Stream chat overlay */
.chat { position: absolute; top: 162px; right: 5px; width: 257px; height: 277px; display: flex; flex-direction: column; justify-content: space-between; font: 10px "Liberation Sans", Arial, sans-serif; color: #fff; }
.chat p { display: flex; align-items: center; gap: 3px; height: 15px; margin: 0; background: #2d2d2d; overflow: hidden; white-space: nowrap; line-height: 15px; }
.chat svg { width: 10px; height: 10px; margin: 0 2px 2px 0; }
.chat b { color: #1f9df0; font-weight: 700; }
.chat .gold { color: #eeb71d; }
.chat .crown { margin: 0; }
.chat a { color: #58d51c; text-decoration: underline; }
.cursor { position: absolute; left: 656px; top: 666px; width: 10px; height: 14px; }
```
